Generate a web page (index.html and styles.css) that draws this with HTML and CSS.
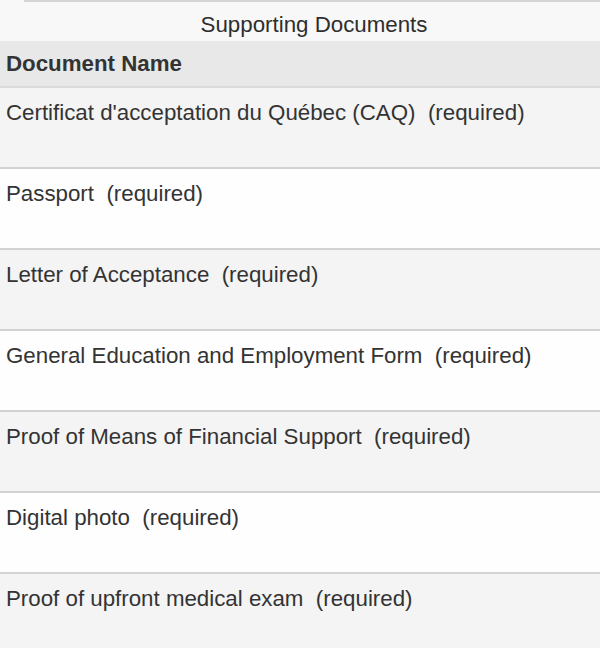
FILE: index.html
```html
<!DOCTYPE html>
<html>
<head>
<meta charset="utf-8">
<link rel="stylesheet" href="styles.css">
</head>
<body>
<div class="page">
  <div class="topbox"></div>
  <div class="title">Supporting Documents</div>
  <div class="table">
    <div class="head">Document Name</div>
    <div class="row odd">Certificat d'acceptation du Québec (CAQ)&nbsp; (required)</div>
    <div class="row">Passport&nbsp; (required)</div>
    <div class="row odd">Letter of Acceptance&nbsp; (required)</div>
    <div class="row">General Education and Employment Form&nbsp; (required)</div>
    <div class="row odd">Proof of Means of Financial Support&nbsp; (required)</div>
    <div class="row">Digital photo&nbsp; (required)</div>
    <div class="row odd last">Proof of upfront medical exam&nbsp; (required)</div>
  </div>
</div>
</body>
</html>
```
FILE: styles.css
```css
html, body {
  margin: 0;
  padding: 0;
  background: #f8f8f8;
}
.page {
  width: 600px;
  height: 648px;
  overflow: hidden;
  font-family: "Liberation Sans", Arial, sans-serif;
  color: #333;
  background: #f8f8f8;
}
.topbox {
  margin-left: 24px;
  height: 0;
  border-top: 2px solid #d4d4d4;
  border-left: 1px solid #d8d8d8;
  box-sizing: border-box;
}
.title {
  height: 39px;
  line-height: 46px;
  padding-left: 28px;
  text-align: center;
  font-size: 22.3px;
  color: #2e2e2e;
  background: #f8f8f8;
}
.head {
  height: 47px;
  line-height: 46px;
  padding-left: 6px;
  font-size: 22.3px;
  font-weight: bold;
  color: #333;
  background: #e8e8e8;
  border-bottom: 2px solid #dadada;
  box-sizing: border-box;
}
.row {
  height: 81px;
  box-sizing: border-box;
  padding: 12px 0 0 6px;
  line-height: 26px;
  font-size: 22.3px;
  color: #333;
  background: #fefefe;
  border-bottom: 2px solid #d2d2d2;
  white-space: nowrap;
}
.row.odd {
  background: #f4f4f4;
}
.row.last {
  border-bottom: none;
}
```
